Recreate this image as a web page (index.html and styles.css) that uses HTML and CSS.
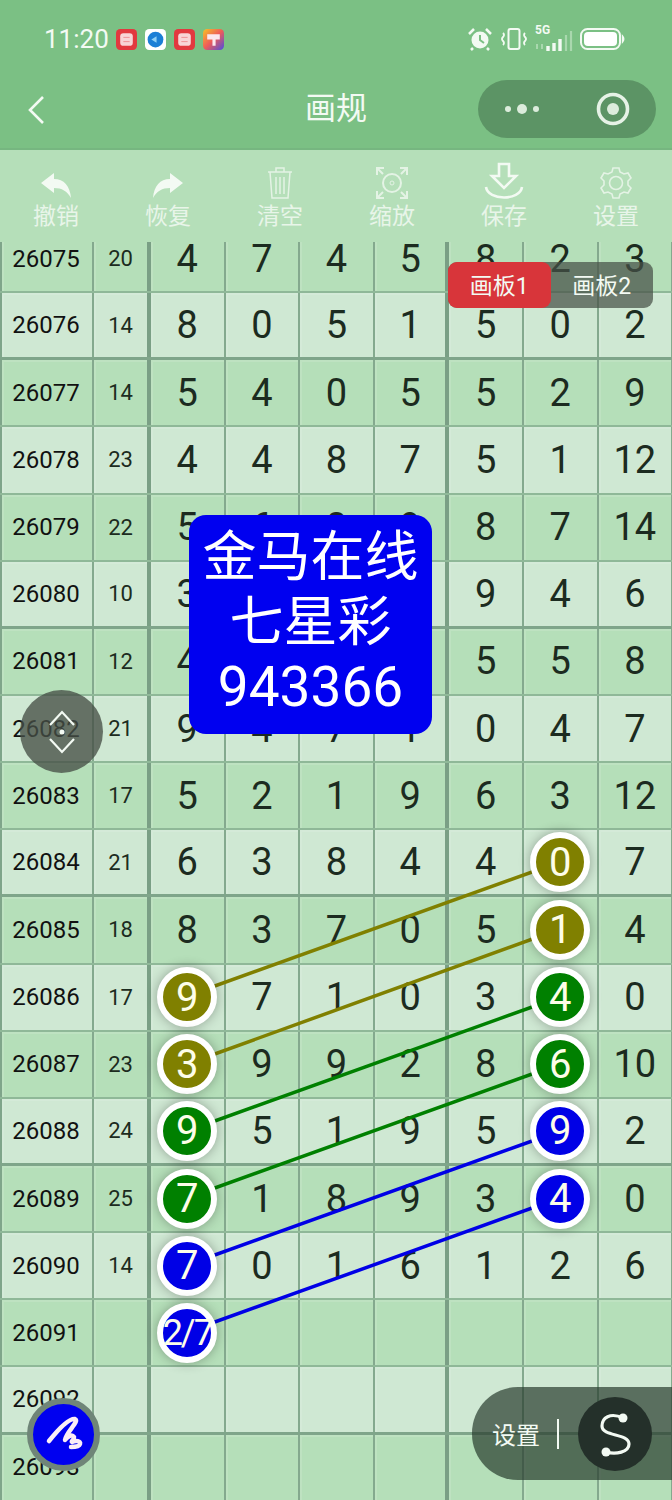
FILE: index.html
```html
<!DOCTYPE html>
<html lang="zh-CN">
<head>
    <meta charset="UTF-8">
    <meta name="viewport" content="width=device-width, initial-scale=1.0">
    <title>画规</title>
    <link rel="stylesheet" href="styles.css">
</head>
<body>
    <div id="page">
        <div class="status">
            <span class="time">11:20</span>
            <svg class="app" viewBox="0 0 20 20"><rect width="20" height="20" rx="4" fill="#e2393f"/><rect x="4" y="4" width="12" height="12" rx="3" fill="#f8d5d7"/><path d="M7 8h6M7 12h6" stroke="#ee8f93" stroke-width=".9"/></svg>
            <svg class="app" viewBox="0 0 20 20"><rect width="20" height="20" rx="4" fill="#fff"/><circle cx="10" cy="10" r="7.5" fill="#1b7fd6"/><path d="M6 10l5-3v6z" fill="#8fd0f5"/></svg>
            <svg class="app" viewBox="0 0 20 20"><rect width="20" height="20" rx="4" fill="#e2393f"/><rect x="4" y="4" width="12" height="12" rx="3" fill="#f8d5d7"/><path d="M7 8h6M7 12h6" stroke="#ee8f93" stroke-width=".9"/></svg>
            <svg class="app" viewBox="0 0 20 20"><defs><linearGradient id="rb" x1="0" y1="0" x2="1" y2="1"><stop offset="0" stop-color="#f7c325"/><stop offset=".5" stop-color="#ee5a5a"/><stop offset="1" stop-color="#4a4fe0"/></linearGradient></defs><rect width="20" height="20" rx="4" fill="url(#rb)"/><path d="M4 5h12v5H4zM9 10h3v6H9z" fill="#fbe8ee"/></svg>
            <div class="sysicons">
                <svg width="26" height="24" viewBox="0 0 26 24"><circle cx="13" cy="13" r="8.5" fill="#f3faf3"/><path d="M13 8v5l4 3" stroke="#7bc084" stroke-width="2" fill="none"/><path d="M2 7l5-5M24 7l-5-5M6 21l-2 2M20 21l2 2" stroke="#f3faf3" stroke-width="2.5"/></svg>
                <svg width="28" height="24" viewBox="0 0 28 24"><rect x="8.5" y="2" width="11" height="20" rx="2" fill="none" stroke="#f3faf3" stroke-width="2"/><path d="M3 6q2 2 0 4t0 4 0 4M25 6q-2 2 0 4t0 4 0 4" fill="none" stroke="#f3faf3" stroke-width="1.8"/></svg>
                <div class="net">
                    <span class="fiveg">5G</span>
                    <svg width="38" height="22" viewBox="0 0 38 22"><path d="M2 20v-5M7 20v-5" stroke="#a9d8ae" stroke-width="2"/><path d="M13 22v-5M19 22v-8M25 22v-12" stroke="#f3faf3" stroke-width="3.4"/><path d="M31 22V6M36 22V2" stroke="#a9d8ae" stroke-width="2.2"/></svg>
                </div>
                <svg width="46" height="24" viewBox="0 0 46 24"><rect x="1" y="2" width="39" height="20" rx="6.5" fill="none" stroke="#f3faf3" stroke-width="2"/><rect x="4" y="5" width="33" height="14" rx="4" fill="#fff"/><path d="M42.5 9q2.5 3 0 6z" fill="#f3faf3" stroke="#f3faf3" stroke-width="1.4"/></svg>
            </div>
        </div>

        <div class="nav">
            <svg class="back" width="20" height="30" viewBox="0 0 20 30"><path d="M17 2L4 15l13 13" fill="none" stroke="#f3faf3" stroke-width="2.6"/></svg>
            <h1>画规</h1>
            <div class="capsule">
                <svg width="36" height="14" viewBox="0 0 36 14"><circle cx="4" cy="7" r="3" fill="#dcecdc"/><circle cx="18" cy="7" r="5" fill="#dcecdc"/><circle cx="32" cy="7" r="3" fill="#dcecdc"/></svg>
                <svg width="34" height="34" viewBox="0 0 34 34"><circle cx="17" cy="17" r="14.5" fill="none" stroke="#e6f2e6" stroke-width="3.6"/><circle cx="17" cy="17" r="6" fill="#dcecdc"/></svg>
            </div>
        </div>

        <div class="tools">
            <div class="tool">
                <svg width="34" height="30" viewBox="0 0 34 30"><path d="M2 13L15 3v6c10 0 16 7 17 19-4-7-9-10-17-10v5z" fill="#f3faf3"/></svg>
                <span>撤销</span>
            </div>
            <div class="tool">
                <svg width="34" height="30" viewBox="0 0 34 30"><path d="M32 13L19 3v6C9 9 3 16 2 28c4-7 9-10 17-10v5z" fill="#f3faf3"/></svg>
                <span>恢复</span>
            </div>
            <div class="tool">
                <svg width="30" height="34" viewBox="0 0 30 34"><path d="M3 6h24M11 6V2h8v4M5 6l2 26h16l2-26M11 11v17M15 11v17M19 11v17" fill="none" stroke="#e4f3e5" stroke-width="1.5"/></svg>
                <span>清空</span>
            </div>
            <div class="tool">
                <svg width="34" height="34" viewBox="0 0 34 34"><circle cx="17" cy="17" r="9" fill="none" stroke="#e4f3e5" stroke-width="2"/><circle cx="17" cy="17" r="2" fill="none" stroke="#e4f3e5" stroke-width="1"/><path d="M9 2H2v7M25 2h7v7M9 32H2v-7M25 32h7v-7M2 2l6 6M32 2l-6 6M2 32l6-6M32 32l-6-6" fill="none" stroke="#e4f3e5" stroke-width="2"/></svg>
                <span>缩放</span>
            </div>
            <div class="tool">
                <svg width="40" height="38" viewBox="0 0 40 38"><path d="M15 2h10v12h7L20 26 8 14h7z" fill="none" stroke="#f3faf3" stroke-width="2.6"/><path d="M2 25c2 14 34 14 36 0" fill="none" stroke="#f3faf3" stroke-width="2.6"/></svg>
                <span>保存</span>
            </div>
            <div class="tool">
                <svg width="34" height="34" viewBox="0 0 34 34"><circle cx="17" cy="17" r="6.5" fill="none" stroke="#e4f3e5" stroke-width="1.6"/><path d="M14 2h6l1 4 4 2 4-1 3 5-3 3v4l3 3-3 5-4-1-4 2-1 4h-6l-1-4-4-2-4 1-3-5 3-3v-4L2 12l3-5 4 1 4-2z" fill="none" stroke="#e4f3e5" stroke-width="1.6"/></svg>
                <span>设置</span>
            </div>
        </div>

        <div class="board">
            <svg class="lines" width="672" height="1258" viewBox="0 242 672 1258">
                <path d="M187 996L560 862M187 1064L560 929" stroke="#808000" stroke-width="3.5"/>
                <path d="M187 1131L560 997M187 1198L560 1064" stroke="#008000" stroke-width="3.5"/>
                <path d="M187 1265L560 1131M187 1332L560 1198" stroke="#0000e6" stroke-width="3.5"/>
            </svg>
            <div class="rows">
                <div class="row"><b>26075</b><i>20</i><span>4</span><span>7</span><span>4</span><span>5</span><span>8</span><span>2</span><span>3</span></div>
                <div class="row"><b>26076</b><i>14</i><span>8</span><span>0</span><span>5</span><span>1</span><span>5</span><span>0</span><span>2</span></div>
                <div class="row"><b>26077</b><i>14</i><span>5</span><span>4</span><span>0</span><span>5</span><span>5</span><span>2</span><span>9</span></div>
                <div class="row"><b>26078</b><i>23</i><span>4</span><span>4</span><span>8</span><span>7</span><span>5</span><span>1</span><span>12</span></div>
                <div class="row"><b>26079</b><i>22</i><span>5</span><span>6</span><span>8</span><span>9</span><span>8</span><span>7</span><span>14</span></div>
                <div class="row"><b>26080</b><i>10</i><span>3</span><span>1</span><span>2</span><span>3</span><span>9</span><span>4</span><span>6</span></div>
                <div class="row"><b>26081</b><i>12</i><span>4</span><span>1</span><span>1</span><span>1</span><span>5</span><span>5</span><span>8</span></div>
                <div class="row"><b>26082</b><i>21</i><span>9</span><span>4</span><span>7</span><span>1</span><span>0</span><span>4</span><span>7</span></div>
                <div class="row"><b>26083</b><i>17</i><span>5</span><span>2</span><span>1</span><span>9</span><span>6</span><span>3</span><span>12</span></div>
                <div class="row"><b>26084</b><i>21</i><span>6</span><span>3</span><span>8</span><span>4</span><span>4</span><span><em class="ball olive">0</em></span><span>7</span></div>
                <div class="row"><b>26085</b><i>18</i><span>8</span><span>3</span><span>7</span><span>0</span><span>5</span><span><em class="ball olive">1</em></span><span>4</span></div>
                <div class="row"><b>26086</b><i>17</i><span><em class="ball olive">9</em></span><span>7</span><span>1</span><span>0</span><span>3</span><span><em class="ball green">4</em></span><span>0</span></div>
                <div class="row"><b>26087</b><i>23</i><span><em class="ball olive">3</em></span><span>9</span><span>9</span><span>2</span><span>8</span><span><em class="ball green">6</em></span><span>10</span></div>
                <div class="row"><b>26088</b><i>24</i><span><em class="ball green">9</em></span><span>5</span><span>1</span><span>9</span><span>5</span><span><em class="ball blue">9</em></span><span>2</span></div>
                <div class="row"><b>26089</b><i>25</i><span><em class="ball green">7</em></span><span>1</span><span>8</span><span>9</span><span>3</span><span><em class="ball blue">4</em></span><span>0</span></div>
                <div class="row"><b>26090</b><i>14</i><span><em class="ball blue">7</em></span><span>0</span><span>1</span><span>6</span><span>1</span><span>2</span><span>6</span></div>
                <div class="row"><b>26091</b><i></i><span><em class="ball blue frac">2/7</em></span><span></span><span></span><span></span><span></span><span></span><span></span></div>
                <div class="row"><b>26092</b><i></i><span></span><span></span><span></span><span></span><span></span><span></span><span></span></div>
                <div class="row"><b>26093</b><i></i><span></span><span></span><span></span><span></span><span></span><span></span><span></span></div>
            </div>
        </div>

        <div class="tabs">
            <div class="tab on">画板1</div>
            <div class="tab">画板2</div>
        </div>

        <div class="promo">金马在线<br>七星彩<br><span class="code">943366</span></div>

        <div class="updown">
            <svg width="34" height="48" viewBox="0 0 34 48"><path d="M5 17L17 4l12 13M5 31l12 13 12-13" fill="none" stroke="#f3faf3" stroke-width="2.2"/><circle cx="17" cy="24" r="2.5" fill="#f3faf3"/></svg>
        </div>

        <div class="pen">
            <svg width="46" height="42" viewBox="0 0 46 42"><path d="M8 27C16 17 28 4 34 5C39 7 25 18 24 26C27 22 31 20 33 23C33 26 30 27 31 28C35 26 40 27 39 30C38 33 33 33 30 33" fill="none" stroke="#fbeef6" stroke-width="4.5" stroke-linecap="round" stroke-linejoin="round"/></svg>
        </div>

        <div class="setting">
            <span>设置</span>
            <div class="bar"></div>
            <div class="scurve">
                <svg width="38" height="50" viewBox="0 0 38 50"><path d="M27 9C14 3 6 9 6 17C6 28 33 24 33 35C33 43 20 46 10 43" fill="none" stroke="#f3faf3" stroke-width="3.2"/><circle cx="27" cy="9" r="4.5" fill="#f3faf3"/><circle cx="10" cy="43" r="4.5" fill="#f3faf3"/></svg>
            </div>
        </div>
    </div>
</body>
</html>
```

FILE: styles.css
```css
* {
    box-sizing: border-box;
}
body {
    margin: 0;
    font-family: Roboto, "Noto Sans CJK SC", sans-serif;
}
#page {
    position: relative;
    width: 672px;
    height: 1500px;
    overflow: hidden;
    display: flex;
    flex-direction: column;
    background-color: #b5dfb9;
}
.status {
    height: 62px;
    flex: none;
    display: flex;
    align-items: center;
    padding: 16px 46px 0 44px;
    background-color: #7bc084;
}
.time {
    font-size: 26px;
    color: #f3faf3;
    margin-right: 7px;
}
.app {
    width: 21px;
    height: 21px;
    margin-right: 8px;
}
.sysicons {
    margin-left: auto;
    display: flex;
    align-items: center;
    gap: 7px;
}
.net {
    position: relative;
    width: 38px;
    height: 24px;
    display: flex;
    align-items: flex-end;
}
.fiveg {
    position: absolute;
    top: -4px;
    left: 0;
    font-size: 12px;
    font-weight: 700;
    color: #f3faf3;
}
.nav {
    position: relative;
    height: 88px;
    flex: none;
    display: flex;
    align-items: center;
    justify-content: center;
    background-color: #7bc084;
    border-bottom: 2px solid #76b680;
}
.back {
    position: absolute;
    left: 26px;
    top: 33px;
}
h1 {
    margin: 0;
    font-size: 31px;
    font-weight: 400;
    color: #f3faf3;
}
.capsule {
    position: absolute;
    left: 478px;
    top: 18px;
    width: 178px;
    height: 58px;
    border-radius: 29px;
    background-color: #5c9465;
    display: flex;
    align-items: center;
    justify-content: space-between;
    padding: 0 26px 0 26px;
}
.tools {
    height: 92px;
    flex: none;
    display: flex;
    background-color: #b5dfb9;
}
.tool {
    width: 112px;
    height: 92px;
    display: flex;
    flex-direction: column;
    align-items: center;
    justify-content: flex-end;
    padding-bottom: 11px;
    gap: 3px;
}
.tool span {
    font-size: 23px;
    line-height: 28px;
    color: #e8f5e9;
}
.board {
    position: relative;
    flex: 1;
    overflow: hidden;
}
.lines {
    position: absolute;
    top: 0;
    left: 0;
    z-index: 1;
}
.rows {
    margin-top: -16px;
}
.row {
    display: grid;
    grid-template-columns: 94px 57px repeat(7, 74.6px);
    height: 67.15px;
    background-color: #b5dfb9;
    border-bottom: 2px solid #8fb898;
}
.row:nth-child(even) {
    background-color: #cfe8d3;
}
.row:nth-child(4n+2) {
    border-bottom: 3px solid #7fa58a;
}
.row > * {
    display: flex;
    align-items: center;
    justify-content: center;
    border-right: 2px solid #84a98e;
    box-shadow: inset 2px 2px 0 rgba(255, 255, 255, .12);
    font-style: normal;
    font-weight: 400;
    color: #1c2b20;
}
.row b {
    padding-right: 2px;
    font-size: 24px;
    color: #111;
    border-left: 2px solid #7fa58a;
}
.row i {
    font-size: 22px;
    border-right: 4px solid #7a9f85;
}
.row span {
    font-size: 38px;
}
.row span:nth-child(6) {
    border-right: 4px solid #7a9f85;
}
.ball {
    position: relative;
    z-index: 2;
    width: 60px;
    height: 60px;
    border-radius: 50%;
    border: 6px solid #fff;
    display: flex;
    align-items: center;
    justify-content: center;
    font-style: normal;
    font-size: 40px;
    font-weight: 400;
    color: #fdfde8;
    box-shadow: 0 0 12px rgba(0, 0, 0, .3);
}
.olive {
    background-color: #808000;
}
.green {
    background-color: #008000;
}
.blue {
    background-color: #0000e6;
}
.frac {
    font-size: 36px;
    letter-spacing: -2px;
}
.tabs {
    position: absolute;
    left: 448px;
    top: 262px;
    z-index: 3;
    width: 205px;
    height: 46px;
    display: flex;
    border-radius: 9px;
    background-color: rgba(70, 80, 70, .72);
}
.tab {
    flex: 1;
    display: flex;
    align-items: center;
    justify-content: center;
    padding-bottom: 3px;
    font-size: 23px;
    color: #f3faf3;
}
.tab.on {
    background-color: #d8353a;
    border-radius: 9px;
}
.promo {
    position: absolute;
    left: 189px;
    top: 515px;
    z-index: 3;
    width: 243px;
    height: 219px;
    padding-top: 10px;
    border-radius: 17px;
    background-color: #0000f0;
    color: #fff;
    font-size: 54px;
    line-height: 65px;
    text-align: center;
}
.code {
    font-size: 55px;
}
.updown {
    position: absolute;
    left: 20px;
    top: 690px;
    z-index: 3;
    width: 83px;
    height: 83px;
    border-radius: 50%;
    background-color: rgba(70, 80, 70, .78);
    display: flex;
    align-items: center;
    justify-content: center;
}
.pen {
    position: absolute;
    left: 27px;
    top: 1398px;
    z-index: 3;
    width: 73px;
    height: 73px;
    border-radius: 50%;
    border: 6px solid #6f8578;
    background-color: #0000f0;
    display: flex;
    align-items: center;
    justify-content: center;
}
.setting {
    position: absolute;
    left: 472px;
    top: 1387px;
    z-index: 3;
    width: 200px;
    height: 93px;
    border-radius: 46px 0 0 46px;
    background-color: rgba(40, 60, 45, .7);
    display: flex;
    align-items: center;
    padding-left: 20px;
    color: #f3faf3;
    font-size: 24px;
}
.bar {
    width: 2px;
    height: 30px;
    margin-left: 17px;
    background-color: #f3faf3;
}
.scurve {
    width: 74px;
    height: 74px;
    margin-left: 19px;
    border-radius: 50%;
    background-color: #24302a;
    display: flex;
    align-items: center;
    justify-content: center;
}
```
